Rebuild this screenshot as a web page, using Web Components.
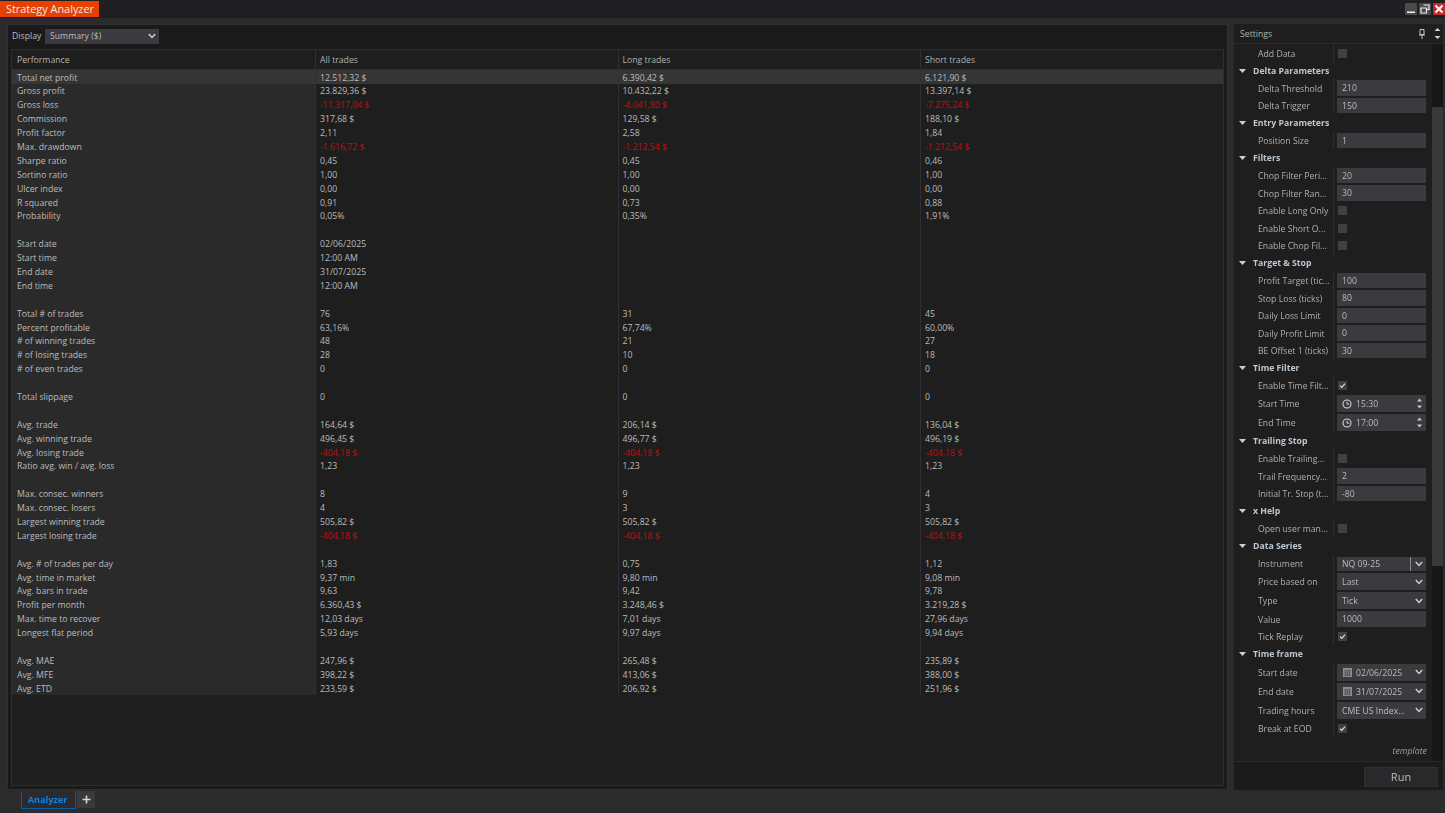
<!DOCTYPE html>
<html>
<head>
<meta charset="utf-8">
<title>Strategy Analyzer</title>
<style>
html, body {margin: 0; height: 100%; background: #2b2b2d; overflow: hidden;}
body {font: 8.7px "Open Sans", "Noto Sans", sans-serif; color: #bcbcbc;}
sa-app {filter: blur(.3px);}
</style>
</head>
<body>
<sa-app></sa-app>
<script>
const rows = [
    ["Total net profit", "12.512,32 $", "6.390,42 $", "6.121,90 $"],
    ["Gross profit", "23.829,36 $", "10.432,22 $", "13.397,14 $"],
    ["Gross loss", "-11.317,04 $", "-4.041,80 $", "-7.275,24 $"],
    ["Commission", "317,68 $", "129,58 $", "188,10 $"],
    ["Profit factor", "2,11", "2,58", "1,84"],
    ["Max. drawdown", "-1.616,72 $", "-1.212,54 $", "-1.212,54 $"],
    ["Sharpe ratio", "0,45", "0,45", "0,46"],
    ["Sortino ratio", "1,00", "1,00", "1,00"],
    ["Ulcer index", "0,00", "0,00", "0,00"],
    ["R squared", "0,91", "0,73", "0,88"],
    ["Probability", "0,05%", "0,35%", "1,91%"],
    [],
    ["Start date", "02/06/2025", "", ""],
    ["Start time", "12:00 AM", "", ""],
    ["End date", "31/07/2025", "", ""],
    ["End time", "12:00 AM", "", ""],
    [],
    ["Total # of trades", "76", "31", "45"],
    ["Percent profitable", "63,16%", "67,74%", "60,00%"],
    ["# of winning trades", "48", "21", "27"],
    ["# of losing trades", "28", "10", "18"],
    ["# of even trades", "0", "0", "0"],
    [],
    ["Total slippage", "0", "0", "0"],
    [],
    ["Avg. trade", "164,64 $", "206,14 $", "136,04 $"],
    ["Avg. winning trade", "496,45 $", "496,77 $", "496,19 $"],
    ["Avg. losing trade", "-404,18 $", "-404,18 $", "-404,18 $"],
    ["Ratio avg. win / avg. loss", "1,23", "1,23", "1,23"],
    [],
    ["Max. consec. winners", "8", "9", "4"],
    ["Max. consec. losers", "4", "3", "3"],
    ["Largest winning trade", "505,82 $", "505,82 $", "505,82 $"],
    ["Largest losing trade", "-404,18 $", "-404,18 $", "-404,18 $"],
    [],
    ["Avg. # of trades per day", "1,83", "0,75", "1,12"],
    ["Avg. time in market", "9,37 min", "9,80 min", "9,08 min"],
    ["Avg. bars in trade", "9,63", "9,42", "9,78"],
    ["Profit per month", "6.360,43 $", "3.248,46 $", "3.219,28 $"],
    ["Max. time to recover", "12,03 days", "7,01 days", "27,96 days"],
    ["Longest flat period", "5,93 days", "9,97 days", "9,94 days"],
    [],
    ["Avg. MAE", "247,96 $", "265,48 $", "235,89 $"],
    ["Avg. MFE", "398,22 $", "413,06 $", "388,00 $"],
    ["Avg. ETD", "233,59 $", "206,92 $", "251,96 $"],
];

// s = section, t = text input, c = checkbox, v = ticked, k = time, d = date, o = dropdown, i = instrument
const settings = [
    ["c", "Add Data"],
    ["s", "Delta Parameters"],
    ["t", "Delta Threshold", "210"],
    ["t", "Delta Trigger", "150"],
    ["s", "Entry Parameters"],
    ["t", "Position Size", "1"],
    ["s", "Filters"],
    ["t", "Chop Filter Peri...", "20"],
    ["t", "Chop Filter Ran...", "30"],
    ["c", "Enable Long Only"],
    ["c", "Enable Short O..."],
    ["c", "Enable Chop Fil..."],
    ["s", "Target & Stop"],
    ["t", "Profit Target (tic...", "100"],
    ["t", "Stop Loss (ticks)", "80"],
    ["t", "Daily Loss Limit", "0"],
    ["t", "Daily Profit Limit", "0"],
    ["t", "BE Offset 1 (ticks)", "30"],
    ["s", "Time Filter"],
    ["v", "Enable Time Filt..."],
    ["k", "Start Time", "15:30"],
    ["k", "End Time", "17:00"],
    ["s", "Trailing Stop"],
    ["c", "Enable Trailing..."],
    ["t", "Trail Frequency...", "2"],
    ["t", "Initial Tr. Stop (t...", "-80"],
    ["s", "x Help"],
    ["c", "Open user man..."],
    ["s", "Data Series"],
    ["i", "Instrument", "NQ 09-25"],
    ["o", "Price based on", "Last"],
    ["o", "Type", "Tick"],
    ["t", "Value", "1000"],
    ["v", "Tick Replay"],
    ["s", "Time frame"],
    ["d", "Start date", "02/06/2025"],
    ["d", "End date", "31/07/2025"],
    ["o", "Trading hours", "CME US Index..."],
    ["v", "Break at EOD"],
];

const chevron = `<svg width="8" height="6" viewBox="0 0 8 6"><path d="M.8 1 4 4.4 7.2 1" fill="none" stroke="#d0d0d0" stroke-width="1.5"/></svg>`;
const tick = `<svg width="7" height="7" viewBox="0 0 7 7"><path d="M1 3.6 2.8 5.4 6 1.6" fill="none" stroke="#e0e0e0" stroke-width="1.2"/></svg>`;
const clock = `<svg width="10" height="10" viewBox="0 0 10 10"><circle cx="5" cy="5" r="4" fill="none" stroke="#d4d4d4" stroke-width="1.1"/><path d="M5 2.6V5.2H7.2" fill="none" stroke="#d4d4d4"/></svg>`;
const calendar = `<svg width="9" height="9" viewBox="0 0 9 9"><path d="M0 0H9V9H0Z" fill="#8e8e8e"/><path d="M1 2.4H8M1 4.2H8M1 6H8M1 7.6H8M2.6 2.4V8M4.5 2.4V8M6.4 2.4V8" stroke="#4a4a4e" stroke-width=".6"/></svg>`;
const spin = `<svg width="7" height="15" viewBox="0 0 7 15"><path d="M3.5 2.500 6 5.500H1ZM3.5 12.500 1 9.500H6Z" fill="#c8c8c8"/></svg>`;

class SaTitlebar extends HTMLElement {
    connectedCallback() {
        this.attachShadow({mode: "open"}).innerHTML = `
        <style>
        :host {display: flex; height: 18px; background: #1f1f21; align-items: flex-start; justify-content: space-between;}
        .tab {margin-top: 1px; width: 99px; height: 16px; background: #e64100; color: #f4e8e0; font-size: 10.9px; line-height: 16px; box-sizing: border-box; padding-left: 6px; white-space: nowrap;}
        .btns {display: flex; margin-top: 3px; gap: 1.5px;}
        .b {width: 12.5px; height: 12px; background: #4a4a4c; display: flex; align-items: center; justify-content: center; border-radius: 1px;}
        .b.x {background: #c42b2b;}
        </style>
        <div class="tab">Strategy Analyzer</div>
        <div class="btns">
            <div class="b"><svg width="10" height="10" viewBox="0 0 10 10"><path d="M1 7.5H9V9H1Z" fill="#eee"/></svg></div>
            <div class="b"><svg width="10" height="10" viewBox="0 0 10 10"><path d="M3.5 1H9V5.5H7M1 4H6.500V9H1Z" fill="none" stroke="#eee" stroke-width="1.200"/></svg></div>
            <div class="b x"><svg width="10" height="10" viewBox="0 0 10 10"><path d="M1.500 1.500 8.500 8.500M8.500 1.500 1.500 8.500" stroke="#fff" stroke-width="2"/></svg></div>
        </div>`;
    }
}

class SaGrid extends HTMLElement {
    connectedCallback() {
        const cells = rows.map((r, n) => {
            const cols = r.length ? r : ["", "", "", ""];
            return cols.map((c, i) => `<div class="c ${i == 0 ? "first" : ""} ${c[0] == "-" ? "neg" : ""} ${n == 0 ? "sel" : ""}">${c || "&nbsp;"}</div>`).join("");
        }).join("");
        this.attachShadow({mode: "open"}).innerHTML = `
        <style>
        :host {display: block; flex: 1; margin: 0 3px 3px 3px; border: 1px solid #2e2e30; background: #1e1e1e; min-height: 0;}
        .g, .head {display: grid; grid-template-columns: 304px 302.5px 302.5px 1fr;}
        .g {grid-auto-rows: 13.9px;}
        .h, .c {padding-left: 4px; white-space: nowrap; border-right: 1px solid #303032; box-sizing: border-box; overflow: hidden;}
        .c {padding-top: 1.5px; line-height: 12.4px;}
        .h {height: 20px; line-height: 21px; border-bottom: 1px solid #303032; color: #b0b0b0;}
        .h:first-child, .first {padding-left: 5px;}
        .h:nth-child(4), .c:nth-child(4n) {border-right: 0;}
        .first {background: #2a2a2b;}
        .neg {color: #c00e0e;}
        .sel {background: #353536;}
        </style>
        <div class="head">
            <div class="h">Performance</div><div class="h">All trades</div><div class="h">Long trades</div><div class="h">Short trades</div>
        </div>
        <div class="g">${cells}</div>`;
    }
}

class SaStrategyPanel extends HTMLElement {
    connectedCallback() {
        this.attachShadow({mode: "open"}).innerHTML = `
        <style>
        :host {display: flex; flex-direction: column; width: 1221px; background: #1a1a1b; border: 1px solid #303032; box-sizing: border-box;}
        .bar {display: flex; align-items: center; height: 22px; padding: 0 0 2px 4px; flex: none;}
        .lbl {width: 33px;}
        .sel {display: flex; align-items: center; justify-content: space-between; width: 114px; height: 15px; background: #3a3a3f; padding: 0 3px 0 5px; box-sizing: border-box;}
        </style>
        <div class="bar"><span class="lbl">Display</span><div class="sel">Summary ($) ${chevron}</div></div>
        <sa-grid></sa-grid>`;
    }
}

class SaRow extends HTMLElement {
    connectedCallback() {
        const kind = this.getAttribute("kind"), value = this.getAttribute("value") || "", label = this.getAttribute("label");
        let ctl = "";
        if (kind == "t") ctl = `<div class="f">${value}</div>`;
        if (kind == "c") ctl = `<div class="cb"></div>`;
        if (kind == "v") ctl = `<div class="cb">${tick}</div>`;
        if (kind == "k") ctl = `<div class="f ic"><span class="n">${clock}<span>${value}</span></span>${spin}</div>`;
        if (kind == "d") ctl = `<div class="f ic dt"><span class="n">${calendar}<span>${value}</span></span>${chevron}</div>`;
        if (kind == "o") ctl = `<div class="f ic"><span class="p">${value}</span>${chevron}</div>`;
        if (kind == "i") ctl = `<div class="f ic inst"><span class="p">${value}</span><span class="dd">${chevron}</span></div>`;
        const tall = kind == "k" || kind == "d" || kind == "o";
        this.attachShadow({mode: "open"}).innerHTML = `
        <style>
        :host {display: flex; align-items: center; height: ${tall ? 19 : 17.5}px; white-space: nowrap;}
        .l {width: 75px; margin-left: 24px; color: #b0b0b0; flex: none; padding-top: 1px;}
        .v {border-left: 1px solid #2e2e30; align-self: stretch; padding-left: 3px; display: flex; align-items: center; width: 89px;}
        .f {width: 89px; height: ${tall ? 17 : 15.5}px; background: #3a3a3f; box-sizing: border-box; padding: 0 3px 0 5px; line-height: 16.5px;}
        .ic {display: flex; align-items: center; justify-content: space-between;}
        .dt {padding-left: 6px;}
        .n {display: flex; align-items: center; gap: 4px;}
        .n span, .p {padding-top: 1px; line-height: 14px;}
        .cb {width: 9px; height: 9px; background: #3f3f44; margin-left: 1px; display: flex; align-items: center; justify-content: center;}
        .inst {height: 14px; padding-right: 0;}
        .dd {border-left: 1px solid #8a8a8a; height: 14px; width: 15px; display: flex; align-items: center; justify-content: center;}
        </style>
        <div class="l">${label}</div><div class="v">${ctl}</div>`;
    }
}

class SaSection extends HTMLElement {
    connectedCallback() {
        this.attachShadow({mode: "open"}).innerHTML = `
        <style>
        :host {display: flex; align-items: center; height: 17.5px; font-weight: 700; color: #bdc7d0; white-space: nowrap;}
        svg {margin: 0 7px 0 5px;}
        </style>
        <svg width="7" height="4" viewBox="0 0 7 4"><path d="M0 0H7L3.5 4Z" fill="#d0d0d0"/></svg><slot></slot>`;
    }
}

class SaSettings extends HTMLElement {
    connectedCallback() {
        const list = settings.map(s => s[0] == "s"
            ? `<sa-section>${s[1].replace("&", "&amp;")}</sa-section>`
            : `<sa-row kind="${s[0]}" label="${s[1]}" value="${s[2] || ""}"></sa-row>`).join("");
        this.attachShadow({mode: "open"}).innerHTML = `
        <style>
        :host {display: flex; flex-direction: column; width: 209px; background: #1e1e1f; box-sizing: border-box;}
        .top {display: flex; align-items: center; justify-content: space-between; height: 20.25px; box-sizing: border-box; flex: none; padding-left: 6px; border-bottom: 1px solid #2a2a2c; color: #b0b0b0;}
        .top .r {display: flex; align-items: center; gap: 9px; margin-right: 2px;}
        .body {display: flex; flex: 1; min-height: 0;}
        .tree {flex: 1; min-width: 0;}
        .sb {width: 11px; flex: none; background: #171718;}
        .th {height: 459px; margin-top: 63px; background: #39393b; border-radius: 1px;}
        .tpl {text-align: right; font-style: italic; font-size: 8.8px; color: #a0a0a0; padding: 8px 0 0 0; margin-right: 5px;}
        .foot {height: 29px; box-sizing: border-box; flex: none; display: flex; align-items: flex-end; justify-content: flex-end; padding: 0 5px 3px 0; border-top: 1px solid #2a2a2c; background: #1b1b1c;}
        .run {width: 74px; height: 20px; background: #29292b; border: 1px solid #2f2f31; box-sizing: border-box; text-align: center; font-size: 11px; line-height: 18px;}
        </style>
        <div class="top">Settings
            <span class="r">
                <svg width="6" height="10" viewBox="0 0 6 10"><path d="M1 .5H5V5.500H1ZM0 6H6M3 6V10" fill="none" stroke="#c8c8c8"/></svg>
                <svg width="7" height="13" viewBox="0 0 7 13"><path d="M3.500 1 6.500 4H.5ZM3.500 12 .5 9H6.500Z" fill="#d0d0d0"/></svg>
            </span>
        </div>
        <div class="body">
            <div class="tree">${list}<div class="tpl">template</div></div>
            <div class="sb"><div class="th"></div></div>
        </div>
        <div class="foot"><div class="run">Run</div></div>`;
    }
}

class SaTabs extends HTMLElement {
    connectedCallback() {
        this.attachShadow({mode: "open"}).innerHTML = `
        <style>
        :host {display: flex; flex: 1; padding-left: 21px; gap: 1px; align-items: flex-start; padding-top: 1px;}
        .t {width: 55px; height: 18px; box-sizing: border-box; border: 1px solid #0b5ea6; border-top: 0; color: #0a84e8; font-weight: 700; font-size: 9.1px; line-height: 17px; padding-right: 2px; text-align: center;}
        .p {width: 18px; height: 17px; background: #3a3a3c; display: flex; align-items: center; justify-content: center;}
        </style>
        <div class="t">Analyzer</div>
        <div class="p"><svg width="9" height="9" viewBox="0 0 9 9"><path d="M4.500 .5V8.500M.5 4.500H8.500" stroke="#d8d8d8" stroke-width="1.600"/></svg></div>`;
    }
}

class SaApp extends HTMLElement {
    connectedCallback() {
        this.attachShadow({mode: "open"}).innerHTML = `
        <style>
        :host {display: flex; flex-direction: column; width: 1445px; height: 813px;}
        .main {display: flex; gap: 6px; height: 766px; margin: 6px 2px 0 7px; flex: none;}
        </style>
        <sa-titlebar></sa-titlebar>
        <div class="main"><sa-strategy-panel></sa-strategy-panel><sa-settings></sa-settings></div>
        <sa-tabs></sa-tabs>`;
    }
}

customElements.define("sa-titlebar", SaTitlebar);
customElements.define("sa-grid", SaGrid);
customElements.define("sa-strategy-panel", SaStrategyPanel);
customElements.define("sa-row", SaRow);
customElements.define("sa-section", SaSection);
customElements.define("sa-settings", SaSettings);
customElements.define("sa-tabs", SaTabs);
customElements.define("sa-app", SaApp);
</script>
</body>
</html>
